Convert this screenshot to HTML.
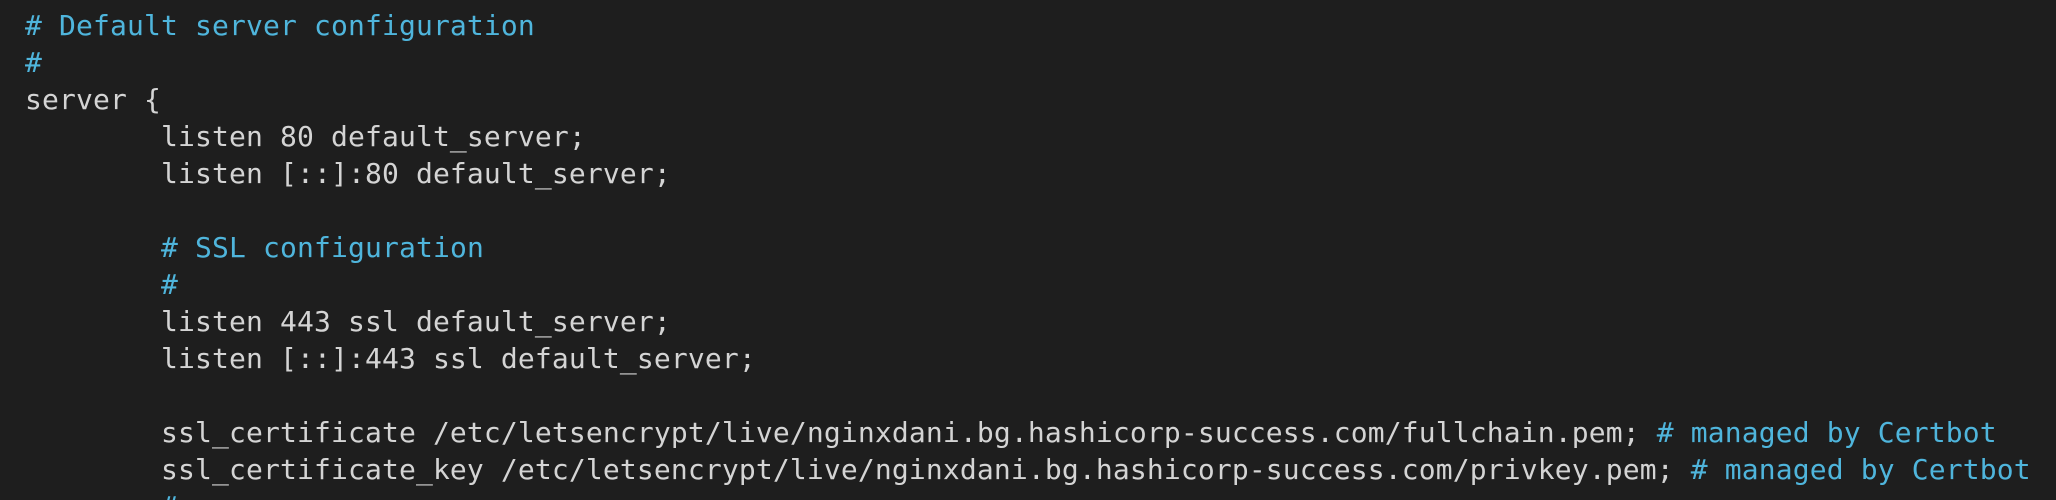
<!DOCTYPE html>
<html><head><meta charset="utf-8"><style>
html,body{margin:0;padding:0;background:#1e1e1e;width:2056px;height:500px;overflow:hidden}
pre{margin:0;padding:7px 0 0 25px;font-family:"DejaVu Sans Mono","Liberation Mono",monospace;font-size:28px;letter-spacing:0.14px;line-height:37px;color:#d4d4d4;white-space:pre}
.c{color:#4fb5dc}
</style></head><body><pre><span class="c"># Default server configuration</span>
<span class="c">#</span>
server {
        listen 80 default_server;
        listen [::]:80 default_server;

        <span class="c"># SSL configuration</span>
        <span class="c">#</span>
        listen 443 ssl default_server;
        listen [::]:443 ssl default_server;

        ssl_certificate /etc/letsencrypt/live/nginxdani.bg.hashicorp-success.com/fullchain.pem; <span class="c"># managed by Certbot</span>
        ssl_certificate_key /etc/letsencrypt/live/nginxdani.bg.hashicorp-success.com/privkey.pem; <span class="c"># managed by Certbot</span>
        <span class="c">#</span>
</pre></body></html>
